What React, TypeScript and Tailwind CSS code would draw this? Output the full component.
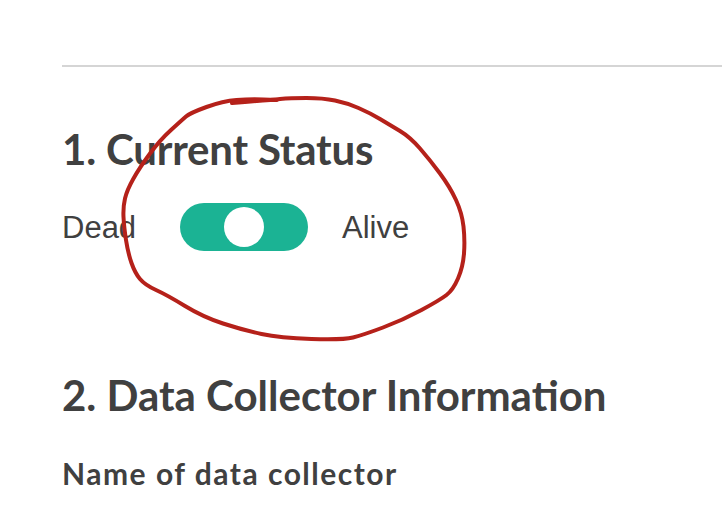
import React from "react";

// hand-drawn annotation around the toggle
const loop: [number, number][] = [
  [232, 103], [270, 100], [290, 98], [323, 98], [347, 103], [370, 113], [390, 125],
  [410, 137], [430, 160], [450, 187], [462, 213], [465, 240], [463, 267], [453, 290],
  [440, 300], [403, 320], [363, 335], [343, 340], [280, 338], [243, 330], [203, 317],
  [167, 295], [145, 285], [135, 273], [128, 253], [124, 227], [123, 207], [127, 190],
  [140, 167], [160, 140], [182, 120], [190, 113], [223, 101], [250, 99], [277, 100],
];

function smoothPath(pts: [number, number][]) {
  let d = `M ${pts[0][0]} ${pts[0][1]}`;
  for (let i = 1; i < pts.length - 1; i++) {
    const mx = (pts[i][0] + pts[i + 1][0]) / 2;
    const my = (pts[i][1] + pts[i + 1][1]) / 2;
    d += ` Q ${pts[i][0]} ${pts[i][1]} ${mx} ${my}`;
  }
  const last = pts[pts.length - 1];
  d += ` L ${last[0]} ${last[1]}`;
  return d;
}

function StatusToggle({ alive = true }: { alive?: boolean }) {
  return (
    <div className="flex items-center h-[48px] mt-[33px] text-[31px] text-[#404040] font-['Liberation_Sans',Arial,sans-serif]">
      <span className="w-[118px] pt-[2px]">Dead</span>
      <button
        aria-pressed={alive}
        className="w-[128px] h-[48px] rounded-full bg-[#1bb394] flex items-center justify-center"
      >
        <span className="w-[40px] h-[40px] rounded-full bg-white" />
      </button>
      <span className="ml-[34px] pt-[2px]">Alive</span>
    </div>
  );
}

export default function App() {
  return (
    <div className="relative min-h-[528px] w-full bg-white overflow-hidden font-['Lato',sans-serif] text-[#404040]">
      <div className="pl-[62px] pt-[65px]">
        <div className="border-t-2 border-[#d5d5d5]" />
        <h2 className="mt-[61px] text-[42px] leading-[42px] font-bold tracking-[-0.2px]">1. Current Status</h2>
        <StatusToggle />
        <h2 className="mt-[123px] text-[42px] leading-[42px] font-bold">2. Data Collector Information</h2>
        <h3 className="mt-[42px] text-[30px] leading-[30px] font-bold tracking-[1.5px]">Name of data collector</h3>
      </div>
      <svg className="absolute inset-0 pointer-events-none" width="722" height="528" viewBox="0 0 722 528">
        <path
          d={smoothPath(loop)}
          fill="none"
          stroke="#b5211a"
          strokeWidth="4"
          strokeLinecap="round"
          strokeLinejoin="round"
        />
      </svg>
    </div>
  );
}
